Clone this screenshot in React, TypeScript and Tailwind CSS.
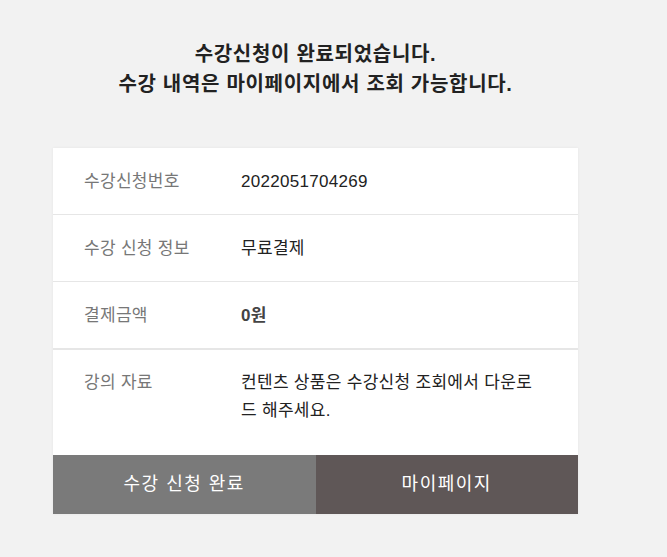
import React from "react";

const font = { fontFamily: '"Liberation Sans", "Noto Sans CJK KR", sans-serif' };

function Row({ label, children, last }: { label: string; children: React.ReactNode; last?: boolean }) {
  return (
    <div className={`flex px-[31px] pb-[19px] pt-[21px] ${last ? "" : "border-b border-[#e6e6e6]"}`}>
      <div className="w-[157px] shrink-0 text-[17px] leading-[26px] tracking-[0.3px] text-[#777777]">{label}</div>
      <div className="flex-1 text-[17px] leading-[26px] tracking-[0.3px] text-[#222222]">{children}</div>
    </div>
  );
}

export default function App() {
  return (
    <div className="min-h-[557px] w-full bg-[#f2f2f2] pt-[39px]" style={font}>
      <div className="ml-[53px] w-[525px] text-center text-[20px] font-bold leading-[30px] tracking-[0.7px] text-[#222222]">
        <p>수강신청이 완료되었습니다.</p>
        <p>수강 내역은 마이페이지에서 조회 가능합니다.</p>
      </div>
      <div className="ml-[53px] mt-[49px] w-[525px] bg-white shadow-[0_0_3px_rgba(0,0,0,0.06)]">
        <Row label="수강신청번호">2022051704269</Row>
        <Row label="수강 신청 정보">무료결제</Row>
        <div className="flex border-b-2 border-[#e6e6e6] px-[31px] pb-[19px] pt-[21px]">
          <div className="w-[157px] shrink-0 text-[17px] leading-[26px] tracking-[0.3px] text-[#777777]">결제금액</div>
          <div className="flex-1 text-[17px] font-bold leading-[26px] tracking-[0.3px] text-[#444444]">0원</div>
        </div>
        <div className="flex px-[31px] pb-[30px] pt-[19px]">
          <div className="w-[157px] shrink-0 text-[17px] leading-[28px] tracking-[0.3px] text-[#777777]">강의 자료</div>
          <div className="w-[296px] text-[17px] leading-[28px] tracking-[0.3px] text-[#222222]">
            컨텐츠 상품은 수강신청 조회에서 다운로드 해주세요.
          </div>
        </div>
        <div className="flex h-[59px]">
          <button className="flex flex-1 items-center justify-center bg-[#7a7a7a] text-[18px] tracking-[1.5px] text-white">
            수강 신청 완료
          </button>
          <button className="flex flex-1 items-center justify-center bg-[#5f5757] text-[18px] tracking-[1.5px] text-white">
            마이페이지
          </button>
        </div>
      </div>
    </div>
  );
}
